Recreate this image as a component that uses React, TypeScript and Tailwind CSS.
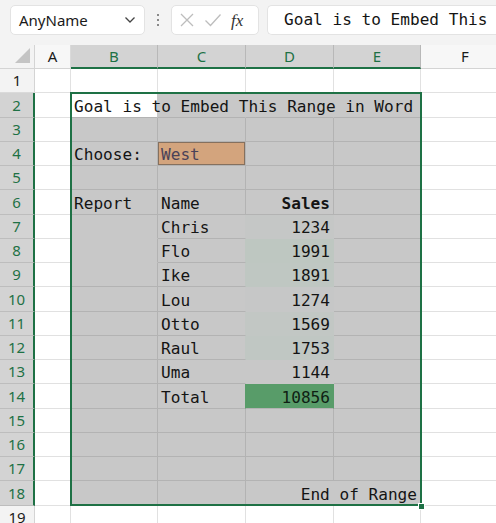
import React from 'react'

const COLS = ['A', 'B', 'C', 'D', 'E', 'F']
const WIDTHS: Record<string, string> = {
  A: 'w-[36px]', B: 'w-[87px]', C: 'w-[88px]', D: 'w-[88px]', E: 'w-[87px]', F: 'w-[89px]',
}
const SHADE = '#c8c8c8'
const LINE_SEL = '#b3b3b3'
const LINE = '#e1e1e1'

type Cell = { text: string; right?: boolean; bold?: boolean; overflow?: 'right' | 'left'; color?: string }

const cells: Record<string, Cell> = {
  B2: { text: 'Goal is to Embed This Range in Word', overflow: 'right' },
  B4: { text: 'Choose:' },
  C4: { text: 'West', color: '#4a4258' },
  B6: { text: 'Report' },
  C6: { text: 'Name' },
  D6: { text: 'Sales', right: true, bold: true },
  C7: { text: 'Chris' }, D7: { text: '1234', right: true },
  C8: { text: 'Flo' }, D8: { text: '1991', right: true },
  C9: { text: 'Ike' }, D9: { text: '1891', right: true },
  C10: { text: 'Lou' }, D10: { text: '1274', right: true },
  C11: { text: 'Otto' }, D11: { text: '1569', right: true },
  C12: { text: 'Raul' }, D12: { text: '1753', right: true },
  C13: { text: 'Uma' }, D13: { text: '1144', right: true },
  C14: { text: 'Total' }, D14: { text: '10856', right: true },
  E18: { text: 'End of Range', right: true, overflow: 'left' },
}

// conditional-format tints under the selection shade
const tints: Record<number, string> = {
  7: '#c5c7c6', 8: '#bec7c1', 9: '#bfc7c2', 10: '#c6c7c7', 11: '#c2c7c4', 12: '#c0c7c3', 13: '#c8c8c8', 14: '#589c69',
}

function inSel(col: string, row: number) {
  return row >= 2 && row <= 18 && ['B', 'C', 'D', 'E'].includes(col)
}

function cellStyle(col: string, row: number) {
  const sel = inSel(col, row)
  let bg = sel ? SHADE : '#ffffff'
  let r = sel ? LINE_SEL : LINE
  let b = sel ? LINE_SEL : LINE
  if (col === 'B' && row === 2) bg = '#ffffff'
  if (row === 2 && ['B', 'C', 'D'].includes(col)) r = SHADE
  if (row === 18 && col === 'D') r = SHADE
  if (col === 'B' && (row === 7 || row === 8)) b = SHADE
  if (col === 'D' && tints[row]) {
    bg = tints[row]
    r = tints[row]
    b = row === 14 ? LINE_SEL : tints[row]
  }
  if (col === 'C' && row >= 7 && row <= 14) r = tints[row]
  if (col === 'D' && row === 6) b = LINE_SEL
  if (col === 'C' && row === 4) bg = '#d3a47d'
  return { bg, r, b }
}

function GridCell({ col, row }: { col: string; row: number }) {
  const key = `${col}${row}`
  const c = cells[key]
  const s = cellStyle(col, row)
  const west = key === 'C4'
  return (
    <div
      className={`${WIDTHS[col]} h-full shrink-0 border-r border-b flex items-end px-[3px] ${c?.right ? 'justify-end' : 'justify-start'}`}
      style={{ backgroundColor: s.bg, borderRightColor: s.r, borderBottomColor: s.b, boxShadow: west ? 'inset 0 0 0 1px #85705e' : undefined }}
    >
      {c && (
        <span
          className={`whitespace-nowrap leading-[20px] ${c.overflow ? 'relative z-10' : ''} ${c.bold ? 'font-bold' : ''}`}
          style={{ color: c.color ?? (key === 'D14' ? '#0f1f14' : '#141414') }}
        >
          {c.text}
        </span>
      )}
    </div>
  )
}

function Toolbar() {
  return (
    <div className="h-[45px] bg-[#f3f3f3] flex items-start pt-[5px] pl-[10px] overflow-hidden">
      <div className="w-[135px] shrink-0 h-[30px] bg-white rounded-[5px] border border-[#e3e3e3] flex items-center pl-[8px] pr-[8px] justify-between">
        <span className="text-[15px] text-[#1a1a1a]" style={{ fontFamily: '"Noto Sans", sans-serif' }}>AnyName</span>
        <svg width="12" height="8" viewBox="0 0 12 8" fill="none" stroke="#444" strokeWidth="1.3">
          <path d="M1.5 1.5 L6 6 L10.5 1.5" />
        </svg>
      </div>
      <div className="w-[26px] shrink-0 h-[30px] flex flex-col items-center justify-center gap-[3px]">
        <span className="w-[2px] h-[2px] rounded-full bg-[#666]" />
        <span className="w-[2px] h-[2px] rounded-full bg-[#666]" />
        <span className="w-[2px] h-[2px] rounded-full bg-[#666]" />
      </div>
      <div className="w-[88px] shrink-0 h-[30px] bg-white rounded-[5px] border border-[#e3e3e3] flex items-center pl-[7px] gap-[9px]">
        <svg width="16" height="16" viewBox="0 0 16 16" fill="none" stroke="#bdbdbd" strokeWidth="1.3">
          <path d="M2 2 L14 14 M14 2 L2 14" />
        </svg>
        <svg width="18" height="16" viewBox="0 0 18 16" fill="none" stroke="#bdbdbd" strokeWidth="1.3">
          <path d="M1.5 8.5 L6.5 13.5 L16.5 2.5" />
        </svg>
        <span className="italic text-[17px] text-[#333] leading-none" style={{ fontFamily: '"Liberation Serif", serif' }}>fx</span>
      </div>
      <div className="ml-[8px] flex-1 min-w-0 h-[30px] bg-white rounded-l-[5px] border border-r-0 border-[#e3e3e3] flex items-center pl-[16px] overflow-hidden">
        <span className="whitespace-nowrap text-[16.1px] text-[#141414]" style={{ fontFamily: '"DejaVu Sans Mono", monospace' }}>Goal is to Embed This Range in Word</span>
      </div>
    </div>
  )
}

export default function App() {
  const rows = Array.from({ length: 19 }, (_, i) => i + 1)
  return (
    <div className="w-[496px] h-[523px] overflow-hidden bg-white relative">
      <Toolbar />
      <div className="relative" style={{ fontFamily: '"DejaVu Sans Mono", monospace' }}>
        {/* column headers */}
        <div className="flex h-[24px]" style={{ fontFamily: '"Noto Sans", sans-serif' }}>
          <div className="w-[35px] shrink-0 h-full bg-[#f3f3f3] border-r border-b border-[#d4d4d4] relative">
            <svg className="absolute right-[4px] bottom-[5px]" width="15" height="15" viewBox="0 0 15 15">
              <polygon points="15,0 15,15 0,15" fill="#c4c4c4" />
            </svg>
          </div>
          {COLS.map((c) => {
            const sel = ['B', 'C', 'D', 'E'].includes(c)
            return (
              <div
                key={c}
                className={`${WIDTHS[c]} shrink-0 h-full flex items-center justify-center text-[15px] border-r ${sel ? 'bg-[#d3d3d3] text-[#1e7145] border-r-[#b8b8b8] border-b-2 border-b-[#1e7145]' : 'bg-[#f7f7f7] text-[#1a1a1a] border-r-[#dadada] border-b border-b-[#d4d4d4]'}`}
              >
                {c}
              </div>
            )
          })}
        </div>
        {/* rows */}
        {rows.map((r) => {
          const sel = r >= 2 && r <= 18
          return (
            <div key={r} className="flex h-[24.25px] text-[16.1px]">
              <div
                className={`w-[35px] shrink-0 h-full flex items-center justify-center text-[15px] border-b ${sel ? 'bg-[#d3d3d3] text-[#1e7145] border-b-[#bdbdbd] border-r-2 border-r-[#1e7145]' : 'bg-[#f3f3f3] text-[#1a1a1a] border-b-[#dadada] border-r border-r-[#d4d4d4]'}`}
                style={{ fontFamily: '"Noto Sans", sans-serif' }}
              >
                {r}
              </div>
              {COLS.map((c) => (
                <GridCell key={c} col={c} row={r} />
              ))}
            </div>
          )
        })}
        {/* selection border B2:E18 */}
        <div className="absolute left-[70px] top-[47px] w-[352px] h-[414px] border-2 border-[#1e7145] z-20 pointer-events-none" />
        <div className="absolute left-[418px] top-[458px] w-[7px] h-[7px] bg-[#1e7145] border border-white z-30" />
      </div>
    </div>
  )
}
